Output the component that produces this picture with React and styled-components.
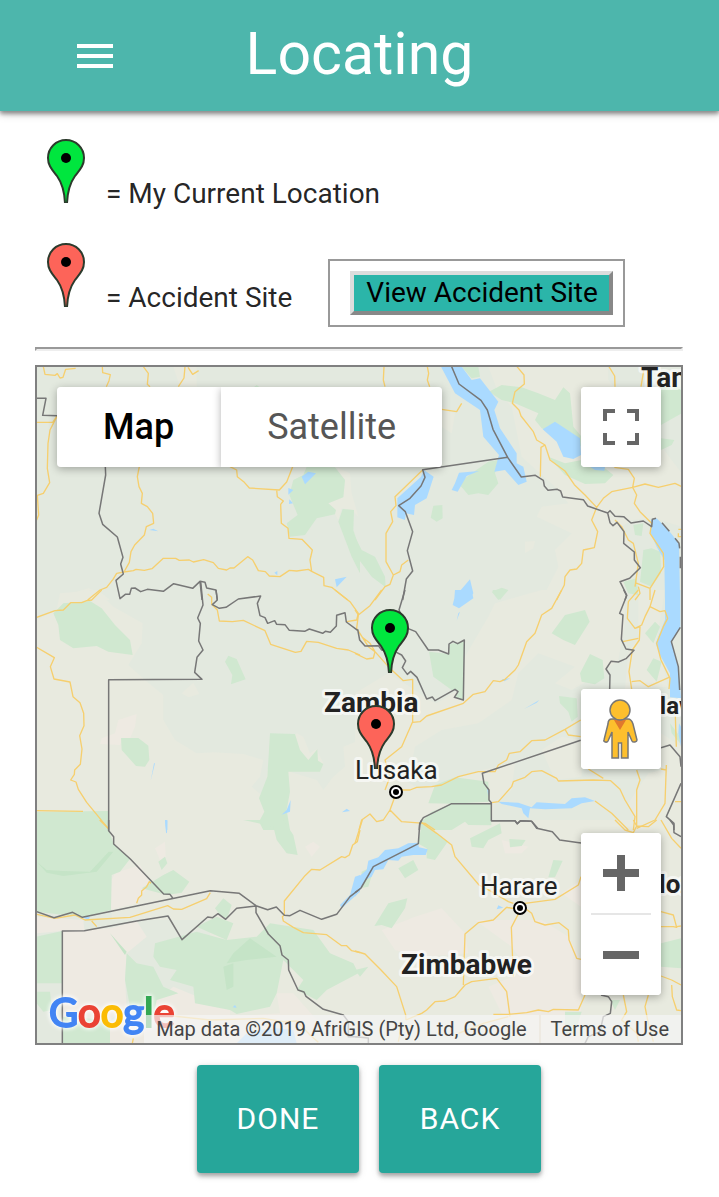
import React from 'react';
import styled, { createGlobalStyle } from 'styled-components';

const GlobalStyle = createGlobalStyle`
  *, *::before, *::after { box-sizing: border-box; }
  body {
    margin: 0;
    background: #fff;
    color: rgba(0, 0, 0, 0.87);
    font-family: Roboto, "Liberation Sans", sans-serif;
    font-size: 28px;
  }
  button { font-family: inherit; cursor: pointer; }
`;

const Header = styled.header`
  display: grid;
  grid-template-columns: 1fr auto 1fr;
  align-items: center;
  height: 111px;
  background: #4db6ac;
  color: #fff;
  box-shadow: 0 4px 4px rgba(0, 0, 0, 0.14), 0 2px 10px rgba(0, 0, 0, 0.2), 0 2px 4px rgba(0, 0, 0, 0.3);
`;

const MenuButton = styled.button`
  display: flex;
  width: 48px;
  margin-left: 71px;
  padding: 0;
  border: 0;
  background: none;
  color: inherit;
`;

const Title = styled.h1`
  margin: 0;
  padding-bottom: 4px;
  font-size: 59px;
  font-weight: 400;
  line-height: 68px;
`;

const Main = styled.main`
  padding: 28px 36px 24px 35px;
`;

const Legend = styled.div`
  display: grid;
  gap: 20px;
`;

const LegendRow = styled.div`
  display: flex;
  align-items: baseline;
  min-height: 84px;
`;

const PinImage = styled.svg`
  flex: none;
  width: 64px;
  height: 64px;
`;

const LegendText = styled.span`
  margin-left: 7px;
  line-height: 34px;
`;

const ActionFrame = styled.div`
  align-self: flex-end;
  margin-left: 36px;
  padding: 10px 10px 10px 20px;
  border: 2px solid #999;
`;

const ViewButton = styled.button`
  display: block;
  height: 44px;
  padding: 0 11px 0 12px;
  border: 4px solid;
  border-color: #ddd #888 #888 #ddd;
  background: #2bb5a9;
  color: #000;
  font-size: 28px;
  line-height: 34px;
  white-space: nowrap;
`;

const Divider = styled.hr`
  margin: 20px 0 14px;
  border: 2px solid;
  border-color: #999 #eee #eee #999;
`;

const MapFrame = styled.section`
  position: relative;
  height: 680px;
  overflow: hidden;
  border: 2px solid #808080;
  background: #e3e9df;
`;

const MapCanvas = styled.svg`
  display: block;
  width: 100%;
  height: 100%;
`;

const Logo = styled.text`
  font-family: Lato, sans-serif;
  font-size: 40px;
  stroke-width: 2px;
  filter: drop-shadow(0 0 2px #fff) drop-shadow(0 0 2px rgba(255, 255, 255, 0.6));
`;

const Card = styled.div`
  display: flex;
  flex-direction: ${(p) => (p.$column ? 'column' : 'row')};
  overflow: hidden;
  border-radius: 4px;
  background: #fff;
  box-shadow: 0 2px 8px rgba(0, 0, 0, 0.3);
`;

const TopControls = styled.div`
  position: absolute;
  inset: 20px 20px auto;
  display: flex;
  justify-content: space-between;
`;

const SideControls = styled.div`
  position: absolute;
  right: 20px;
  bottom: 48px;
  display: grid;
  gap: 64px;
`;

const TypeButton = styled.button`
  height: 80px;
  padding: ${(p) => (p.$active ? '0 47px 0 46px' : '0 46px')};
  border: 0;
  background: #fff;
  color: ${(p) => (p.$active ? '#000' : '#565656')};
  font-size: 36px;
  font-weight: ${(p) => (p.$active ? 500 : 400)};
  box-shadow: 0 2px 8px rgba(0, 0, 0, 0.3);
`;

const IconButton = styled.button`
  display: grid;
  place-items: center;
  width: 80px;
  height: 80px;
  padding: 0;
  border: 0;
  background: #fff;
  color: #666;
`;

const ZoomRule = styled.div`
  height: 2px;
  margin: 0 10px;
  background: #e6e6e6;
`;

const Attribution = styled.footer`
  position: absolute;
  right: 0;
  bottom: 0;
  display: flex;
  gap: 2px;
  color: #444;
  font-size: 20px;
  line-height: 28px;
  white-space: nowrap;
`;

const Credit = styled.span`
  padding: 0 12px;
  background: rgba(245, 245, 245, 0.7);
`;

const TermsLink = styled.a`
  padding: 0 12px 0 10px;
  background: rgba(245, 245, 245, 0.7);
  color: inherit;
  text-decoration: none;
`;

const Actions = styled.div`
  display: flex;
  justify-content: center;
  gap: 20px;
  margin-top: 20px;
  padding-left: 20px;
`;

const ActionButton = styled.button`
  width: 162px;
  height: 108px;
  padding: 0 0 2px;
  border: 0;
  border-radius: 4px;
  background: #26a69a;
  color: #fff;
  font-size: 30px;
  letter-spacing: 1px;
  box-shadow: 0 4px 4px rgba(0, 0, 0, 0.14), 0 2px 10px rgba(0, 0, 0, 0.12), 0 2px 4px rgba(0, 0, 0, 0.2);
`;

function PinShape({ color }) {
  return (
    <>
      <path
        d="M32 1C42 1 50 9 50 19C50 27 45.500 31 41 37C36 44 33.500 53 33 64H31C30.500 53 28 44 23 37C18.500 31 14 27 14 19C14 9 22 1 32 1Z"
        fill={color}
        stroke="#2c3a2c"
        strokeWidth="2"
      />
      <circle cx="32" cy="19" r="5" fill="#000" />
    </>
  );
}

const GREEN = '#00e63e';
const RED = '#fd6459';

const layers = [
  { kind: 'beige', fill: '#e8eadf' },
  { kind: 'pink', fill: '#eeeae2' },
  { kind: 'park', fill: '#d0e8d0' },
  { kind: 'parkDark', fill: '#c5e4c7' },
  { kind: 'water', fill: '#aadaff' },
  { kind: 'roads', stroke: '#f6cf6e', width: 4 },
  { kind: 'borders', stroke: '#777', width: 4.5 },
];

// The map is cut in six tiles, each drawn on a grid three times as fine as the canvas.
const tiles = [
  {
    x: -7, y: -7,
    beige: 'M430 20L500 20 500 80 450 80ZM90 710L175 685 215 700 240 720 90 720ZM890 385L925 325 960 340 965 400 985 470 965 450 935 445 925 480 895 430 940 410 945 360 920 330Z',
    park: 'M830 320L915 322 945 360 940 412 895 430 918 450 915 463 860 475 825 525 780 530 770 490 803 465 778 405 790 360 820 345ZM938 447L972 450 970 510 990 570 990 640 965 590 925 485ZM672 81L680 75 688 81Z',
    water: 'M815 350L835 335 858 340 825 373ZM775 384L790 390 775 404ZM778 418L789 430 777 432ZM915 658L950 650 920 682ZM733 638L742 633 742 646ZM358 510L370 506 385 514Z',
    roads: 'M40 20L45 43 75 46 82 41 90 54 99 52 107 28 137 25M217 20L218 38 241 44 237 62 229 80M340 20L355 40 352 73 360 80M465 20L462 54 445 80M474 22L488 43 506 32M82 167L60 210 54 250 52 325 59 368 40 400 22 406 26 465 20 480M20 187L68 187 82 167M328 320L322 350 327 380 337 400 334 430 352 440 368 460 371 490 349 500 343 525 314 555 303 575 298 607 282 636 260 640 249 658 230 682 210 690 173 720M282 636L310 632 318 628 343 631 366 626 400 595 437 595 448 601 478 600 490 606 521 599 550 608 565 625 590 630 600 624 612 624 653 590 668 600 685 632 706 635 718 648 750 650 778 631 800 633 835 628 845 634 881 652 882 677 905 682 953 720M600 320L620 330 622 350 643 367 658 384 748 390 770 366 788 320M740 390L742 410 760 423 752 433 754 490 774 505 777 535 816 538 847 570 840 600 845 634',
    borders: 'M20 115L48 115 38 166 82 167M226 320L227 345 207 460 218 493 262 531 279 592 272 612 280 642 258 661 270 716 286 703 299 703 304 685 315 684 332 695 352 688 400 694 431 671 488 685 510 664 525 667 530 684 558 690 562 720M510 664L516 720',
  },
  {
    x: 318, y: -7,
    beige: 'M400 20L760 20 760 60 860 180 980 340 980 500 900 475 830 480 800 500 850 620 800 690 720 720 560 720 610 620 600 570 650 520 545 470 560 440 640 430 600 380 500 290 470 140 430 100ZM510 545L540 543 535 565 510 580ZM260 140L300 160 290 220 260 200Z',
    park: 'M320 20L370 20 375 50 350 55ZM402 95L440 75 500 82 550 100 600 120 625 82 645 100 655 200 680 230 680 260 560 205 540 180 550 160 480 130 440 120ZM918 80L980 80 980 160 918 195ZM918 235L958 240 950 255 918 270ZM580 290L630 310 680 300 750 325 775 345 750 370 690 372 630 345ZM310 370L350 340 400 305 430 300 420 340 430 370 400 405 370 400 340 405ZM235 437L262 435 263 475 245 485 227 473ZM0 530L20 570 60 590 90 650 92 682 50 650 20 610 5 590ZM865 570L890 565 916 575 918 640 890 680 855 665 860 620ZM805 665L845 655 850 705 820 700ZM410 695L440 683 460 690 430 720ZM835 495L865 490 860 528 840 525Z',
    water: 'M258 20L320 20 350 60 375 55 430 125 418 150 435 205 485 280 485 310 505 320 515 365 490 375 450 330 418 335 432 285 385 230 375 150 300 100ZM563 208L600 185 675 235 678 285 655 297 625 290 605 245ZM705 320L750 320 748 332 720 330ZM300 370L312 338 372 333 335 348 308 395 290 390ZM207 330L236 350 215 415 180 435 177 465 153 460 150 480 127 472 127 415 198 350ZM888 480L905 475 943 514 972 550 975 720 930 720 928 600 905 560 885 515ZM300 710L345 658 355 700 340 720 300 720Z',
    roads: 'M87 20L85 60 90 80M217 20L221 40 217 60 224 80M260 148L305 155 320 130M486 20L507 45 508 72 480 95 472 130 492 150 498 168 535 215 545 240 570 255 585 300 630 333 658 374 690 405 725 442 710 480 728 515 718 563 685 570 680 610 665 627 645 630 630 650 628 675 605 720M570 255L558 262 556 350M762 20L779 48 780 80M868 20L858 80M778 322L820 328 838 355 833 382 770 395 745 415 725 442M833 382L870 372 910 382 960 370 980 380M833 382L845 405 838 430 855 455 890 490 885 520 925 580 926 620 885 685 840 668M850 680L855 700 840 720M885 685L885 720M780 480L800 500 820 540 835 550 850 610 840 680M203 330L120 410 123 437 107 455 113 485 93 520 93 605 115 645 135 635 140 615 160 600M115 645L105 673 90 680 60 720M970 508L980 508M970 520L970 530 980 530',
    borders: 'M143 720L154 657 173 633 157 572 173 515 151 455 131 437 165 415 198 378 210 352 203 329 458 292 414 208 397 150 378 121 312 72 290 20M458 292L499 351 541 346 565 361 568 378 579 391 607 388 617 393 623 411 685 419 698 438 758 459 765 452 780 469 806 470 828 489 865 483 890 500 892 478 903 475M921 488L943 514M960 535L972 550 974 565M758 459L765 488 774 497 786 487 807 515 806 550 838 576 838 600 856 623 824 655 795 665 815 705 810 720M976 590L976 625',
  },
  {
    x: -7, y: 223,
    beige: 'M20 90L80 60 90 10 200 0 250 50 338 100 335 160 295 225 345 270 400 315 400 390 435 450 500 490 550 487 640 492 700 510 690 560 665 590 700 620 720 500 800 430 820 440 840 490 860 478 880 520 870 545 780 545 860 570 880 600 790 630 780 720 20 720ZM455 310L490 278 508 312 475 322ZM910 560L945 530 940 470 990 450 990 720 780 720 790 630 880 600Z',
    pink: 'M255 430L265 390 320 372 315 410 300 445 275 450 270 465 210 462 215 445Z',
    park: 'M70 70L100 40 180 33 215 55 255 105 300 150 308 195 235 185 200 168 130 175 90 150 85 105ZM595 197L620 207 647 268 603 283 607 255 585 215ZM273 444L325 444 355 467 358 510 345 530 318 528 275 480ZM720 430L795 432 810 480 835 510 862 478 864 512 880 522 870 545 775 545 780 605 770 660 780 720 700 720 687 695 703 665 687 625 712 560ZM20 665L235 663 235 720 20 720Z',
    water: 'M372 520L375 520 362 572ZM405 690L412 692 412 720 408 720ZM782 630L780 665 755 674 770 660ZM936 667L950 656 960 663Z',
    roads: 'M20 82L75 62 100 60 122 38 155 38 170 32 185 30 215 0M20 172L73 203 61 230 72 267 120 276 129 320 150 338 161 370 162 407 149 437 156 477 151 523 134 540 133 553 122 570 138 576 145 598 170 637 235 716M20 662L159 664M533 12L545 22 545 43 562 60 568 93 607 95 640 91 705 122 722 163 796 187 813 184 830 154 865 157 920 175 955 180 990 195M915 0L960 35 985 70 980 90 950 95',
    borders: 'M512 -26L519 45 503 84 511 100 506 153 519 180 501 202 494 247 516 268 236 269 236 722M558 0L562 30 547 44 568 55 588 52 625 27 692 18 682 40 690 77 705 83 713 100 734 92 740 103 765 104 778 121 824 124 838 117 878 130 886 124 901 127 919 108 920 76 945 68 949 96 983 121',
  },
  {
    x: 318, y: 223,
    beige: 'M0 310L100 250 180 300 215 328 245 340 310 300 330 200 400 80 420 40 560 0 810 0 810 100 790 210 740 250 650 300 600 280 660 230 550 190 490 250 470 330 370 400 260 420 180 470 170 520 130 560 200 600 380 540 480 520 470 600 420 640 410 690 600 720 0 720ZM560 480L620 440 680 450 680 560 600 570ZM918 430L980 470 980 720 850 720 820 640 880 550 918 540ZM820 190L850 140 850 0 930 0 905 150 940 290 810 297Z',
    park: 'M590 130L630 75 690 60 704 95 660 165 625 150ZM222 185L282 192 284 162 328 155 326 330 298 322 310 303 290 300 235 260ZM675 250L705 192 743 210 748 265 720 283 680 275ZM612 318L665 325 668 380 650 395 640 365 615 340ZM240 585L300 562 400 575 402 635 290 641 220 640ZM290 641L409 641 409 706 340 705 330 695 290 720 200 720 194 700 230 665ZM870 130L900 95 915 110 895 160ZM875 240L895 205 920 215 905 275ZM412 0L460 0 435 30ZM945 400L975 440 975 460 950 430Z',
    water: 'M300 0L350 0 355 25 312 55 293 45 298 25ZM315 65L305 92 310 70ZM930 0L976 0 976 112 949 155 970 230 978 325 945 322 945 250 915 195 902 160 930 90ZM553 330L507 357 545 338ZM440 268L465 265 448 274ZM430 635L490 638 530 652 545 637 630 642 650 625 690 622 720 633 680 640 650 655 570 658 525 655 520 685 505 670 500 655 440 642ZM396 595L403 605 400 620ZM972 400L978 410 978 470 970 430Z',
    roads: 'M80 0L45 47 10 75 0 60M10 75L5 115 40 170 60 185 100 230 145 272 173 268 173 395 140 470 90 510 105 560 90 600M0 190L35 207 55 204 60 185M20 140L45 160 60 185M620 0L590 55 560 75 540 130 515 155 490 225 480 240 450 268 435 275 415 272 390 305 355 313 325 340 215 378 195 395 173 397M677 390L630 418 570 450 530 452 495 485 463 490 455 510 430 525 420 545 370 545 310 560 260 585 230 590 185 592 165 600 140 600M677 440L640 435 630 418M125 605L105 660 140 695 210 700 240 720M105 660L85 690 65 695 45 672 20 690 12 720M410 638L430 635 470 590 475 575 510 562 530 545 560 542 605 565 610 573 715 570 767 572 795 598 810 630 840 680 835 720M700 537L745 565M845 540L855 570 845 600 845 710M720 633L770 670 820 720M934 525L930 640 900 690 845 715M934 540L918 537M961 378L964 470M960 635L978 635M900 0L885 50 915 65 930 62 938 85 925 110 905 160 918 210 945 265 942 297M850 0L820 35 817 85 840 115 855 110 853 150 832 180 822 245 830 297M885 50L870 80 860 105 840 115M803 155L850 145M830 275L855 272 880 290 942 262',
    borders: 'M8 118L14 150 30 168 70 167 80 180 120 185 140 195 152 213 142 233 157 253 167 244 186 262 215 327 232 321 240 332 300 298 309 305 298 322 325 330 328 150 308 161 294 154 282 162 281 192 250 180 220 180 182 125 158 115 132 60 150 0M806 0L815 17 794 70 804 75 799 148 813 177 837 181 813 206 790 216 768 214 753 237 765 255 764 297M677 451L382 550 387 580 402 600 402 630 409 638 409 692 480 692 487 701 497 692 530 694 548 715M409 641L290 641 205 683 194 700 193 720M976 112L949 155 970 230 974 300M918 473L945 465 975 500 978 530M978 580L934 680 957 700 957 720',
  },
  {
    x: -7, y: 453,
    beige: 'M236 0L990 0 990 670 540 670 540 300 245 300 245 160Z',
    pink: 'M97 333L240 325 320 303 350 350 290 400 285 480 290 560 240 600 240 670 97 670ZM245 180L255 160 330 135 360 190 320 250 240 270ZM375 85L405 65 407 110 390 120ZM20 290L160 300 163 330 97 333 20 340ZM370 550L430 500 600 570 600 590 750 580 740 520 790 520 860 600 850 670 240 670 240 620ZM825 80L850 65 870 80 845 110Z',
    park: 'M20 30L236 30 251 72 300 117 270 155 245 165 243 270 160 292 20 275ZM20 350L97 333 97 490 20 490ZM20 515L60 515 66 570 40 575 20 550ZM97 590L240 600 240 670 97 670ZM385 125L405 110 412 130 395 150ZM335 205L400 165 430 150 478 185 455 218 410 225ZM640 0L760 0 790 45 803 105 770 100 740 60 730 20ZM375 370L430 355 500 335 590 360 680 350 720 310 850 330 900 400 970 430 985 460 890 510 860 540 800 510 820 480 760 420 740 520 720 560 620 582 600 570 495 550 490 500 420 480 440 450 390 440 370 410ZM290 400L320 430 370 440 400 500 445 520 380 540 370 590 300 560 285 480ZM555 265L580 235 605 255 590 300 570 285ZM500 320L560 290 610 310 590 360Z',
    parkDark: 'M20 125L50 150 100 153 180 155 236 95 250 95 200 155 100 168 50 158ZM610 400L660 355 740 410 650 420 590 430ZM240 340L290 395 285 405ZM580 440L610 430 610 500 590 510Z',
    water: 'M405 0L412 0 411 40 408 38ZM990 165L975 170 960 225 930 255 935 265 990 215ZM155 290L180 290 175 300ZM608 562L615 555 620 563ZM620 670L650 640 690 630 740 625 790 630 800 670Z',
    roads: 'M209 0L236 26M320 250L325 235 335 225 335 213 350 200 358 185 363 190M20 283L75 295 135 285 165 300 300 292 413 257 430 267 455 268 530 236 541 218M185 303L200 320M990 30L982 65 968 75 958 105 945 113 935 110 870 150 845 148 825 167 763 243 763 285 757 290 760 303 790 322 820 338 890 344 935 377 950 377 965 392 990 398M400 585L540 600 700 595 760 605 800 603 840 645 865 667M307 670L310 655',
    borders: 'M236 0L236 32 251 50 251 72 301 117 401 222 420 223 428 234M20 275L72 293 128 277 157 292 541 212 628 220 678 257 713 269 739 261 763 286 780 287 810 271 875 298 920 283 960 230 990 207M678 258L620 265 587 298 564 281 548 293 533 291 456 359 414 288 320 303 163 332 97 333 97 670M678 258L678 278 715 342 750 377 756 405 775 420 776 450 804 510 822 516 828 529 880 568 940 585 955 605 955 650 990 650',
  },
  {
    x: 318, y: 453,
    beige: 'M0 0L978 0 978 670 0 670Z',
    pink: 'M80 330L180 290 260 265 330 340 340 400 200 410 120 390ZM360 300L560 300 640 350 678 420 678 670 540 670 440 580 400 500 520 450 470 380ZM440 60L520 80 500 100 450 100ZM620 220L678 180 678 260Z',
    park: 'M200 10L260 50 278 65 240 120 215 115 215 85 190 71ZM345 55L435 10 440 40 400 60 385 85 350 80ZM463 57L512 60 500 78 465 82ZM595 120L623 122 600 172 580 172ZM58 318L100 250 157 235 150 265 110 325 80 315ZM20 155L60 135 40 200 18 204ZM130 145L175 120 190 150 150 175ZM0 450L40 440 15 470ZM918 370L978 355 978 445 918 440ZM765 540L795 540 780 570ZM630 575L680 575 660 640 630 640Z',
    water: 'M0 180L35 150 40 122 70 112 90 90 130 85 160 70 188 68 192 82 218 88 212 105 175 105 140 110 130 122 100 120 85 148 60 150 50 170 30 180 20 204 0 230ZM425 268L430 256 445 263Z',
    roads: 'M0 70L22 0M200 8L245 40 290 75 300 110 372 195 410 215 460 245 475 250M475 265L455 262 415 300 370 308 330 342 325 495M490 282L469 322 475 470M510 250L600 238 670 195 678 170M510 265L530 280 540 305 570 315 612 308 640 330 642 360 665 415 678 418M0 393L30 402 78 450 125 500 152 585 153 600M200 580L215 570 240 545 270 543 300 530 330 495 350 485 425 475 455 515 465 590M415 583L460 583 515 578 550 570 580 575 595 568 670 570 690 525M153 600L200 580M918 320L955 320 965 322 955 285 918 275M965 320L978 318M918 468L950 480 978 495M950 495L952 530 965 570 978 572M880 525L870 560 880 610 895 665M805 525L815 575 800 600 845 640 850 665M780 0L810 30 835 38 845 18 835 0M845 18L880 20 905 0M918 0L950 55 978 85M455 262L470 265M310 640L385 610 460 590M140 620L130 665',
    borders: 'M530 4L545 25 592 35 614 60 678 69M200 0L194 15 190 71 55 140 18 204 0 218M409 2L480 2 487 11 497 2 530 4M945 0L956 15 957 38 978 50M738 525L760 530 770 545 766 580 745 590 735 635 700 650 690 670M0 650L40 654 40 670',
  },
];

const labels = [
  { text: 'Tanzania', x: 604, y: 20, size: 28, bold: true },
  { text: 'Zambia', x: 287, y: 345, size: 28, bold: true },
  { text: 'Lusaka', x: 318, y: 412, size: 26 },
  { text: 'Harare', x: 443, y: 528, size: 26 },
  { text: 'Zimbabwe', x: 364, y: 607, size: 28, bold: true },
  { text: 'Malawi', x: 589, y: 347, size: 24, bold: true },
  { text: 'Mozambique', x: 606, y: 526, size: 26, bold: true },
];

const capitals = [[359, 425], [483, 541]];

const logoLetters = [
  ['G', '#4285f4'], ['o', '#ea4335'], ['o', '#fbbc05'],
  ['g', '#4285f4'], ['l', '#34a853'], ['e', '#ea4335'],
];

function MapDrawing() {
  return (
    <MapCanvas viewBox="0 0 644 676" preserveAspectRatio="xMidYMid slice" role="img" aria-label="Map of Zambia">
      {layers.map((layer) =>
        tiles.map((tile, i) =>
          tile[layer.kind] ? (
            <path
              key={layer.kind + i}
              transform={`translate(${tile.x} ${tile.y}) scale(${1 / 3})`}
              d={tile[layer.kind]}
              fill={layer.fill || 'none'}
              stroke={layer.stroke}
              strokeWidth={layer.width}
              strokeLinejoin="round"
            />
          ) : null
        )
      )}
      {capitals.map(([x, y]) => (
        <g key={x}>
          <circle cx={x} cy={y} r="6" fill="#fff" stroke="#000" strokeWidth="2" />
          <circle cx={x} cy={y} r="3" />
        </g>
      ))}
      {labels.map((l) => (
        <text
          key={l.text}
          x={l.x}
          y={l.y}
          fontSize={l.size}
          fontWeight={l.bold ? 700 : 400}
          fill="#222"
          stroke="rgba(255,255,255,0.6)"
          strokeWidth="6"
          strokeLinejoin="round"
          paintOrder="stroke"
        >
          {l.text}
        </text>
      ))}
      <svg x="321" y="242" width="64" height="64"><PinShape color={GREEN} /></svg>
      <svg x="307" y="338" width="64" height="64"><PinShape color={RED} /></svg>
      <Logo x="12" y="660">
        {logoLetters.map(([letter, color], i) => (
          <tspan key={i} fill={color} stroke={color}>{letter}</tspan>
        ))}
      </Logo>
    </MapCanvas>
  );
}

function Pegman() {
  return (
    <svg width="36" height="62" viewBox="0 0 36 62" aria-hidden="true">
      <path
        d="M9 21H25C28 21 29 23 30 26L34 42C34 44 30 45 29 43L25 34V60H18.500V45H15.500V60H9V34L5 43C4 45 0 44 1 42L5 26C5 23 6 21 9 21Z"
        fill="#fdbf2d"
        stroke="#777"
        strokeWidth="1.500"
      />
      <path d="M11 22H23L17 32Z" fill="#e0792d" />
      <circle cx="17" cy="12" r="10" fill="#fdbf2d" stroke="#777" strokeWidth="1.500" />
    </svg>
  );
}

export default function App() {
  return (
    <>
      <GlobalStyle />
      <Header>
        <MenuButton aria-label="Menu">
          <svg width="48" height="48" viewBox="0 0 24 24" fill="currentColor" aria-hidden="true">
            <path d="M3 18h18v-2H3v2zm0-5h18v-2H3v2zm0-7v2h18V6H3z" />
          </svg>
        </MenuButton>
        <Title>Locating</Title>
      </Header>
      <Main>
        <Legend>
          <LegendRow>
            <PinImage viewBox="1 0 64 64" aria-hidden="true"><PinShape color={GREEN} /></PinImage>
            <LegendText>= My Current Location</LegendText>
          </LegendRow>
          <LegendRow>
            <PinImage viewBox="1 0 64 64" aria-hidden="true"><PinShape color={RED} /></PinImage>
            <LegendText>= Accident Site</LegendText>
            <ActionFrame>
              <ViewButton>View Accident Site</ViewButton>
            </ActionFrame>
          </LegendRow>
        </Legend>
        <Divider />
        <MapFrame>
          <MapDrawing />
          <Attribution>
            <Credit>Map data ©2019 AfriGIS (Pty) Ltd, Google</Credit>
            <TermsLink href="#terms">Terms of Use</TermsLink>
          </Attribution>
          <TopControls>
            <Card>
              <TypeButton $active>Map</TypeButton>
              <TypeButton>Satellite</TypeButton>
            </Card>
            <Card>
              <IconButton aria-label="Toggle fullscreen view">
                <svg width="36" height="36" viewBox="0 0 36 36" fill="none" stroke="currentColor" strokeWidth="4" aria-hidden="true">
                  <path d="M2 12V2H12M24 2H34V12M34 24V34H24M12 34H2V24" />
                </svg>
              </IconButton>
            </Card>
          </TopControls>
          <SideControls>
            <Card>
              <IconButton aria-label="Street View"><Pegman /></IconButton>
            </Card>
            <Card $column>
              <IconButton aria-label="Zoom in">
                <svg width="36" height="36" viewBox="0 0 36 36" fill="currentColor" aria-hidden="true">
                  <path d="M14 0H22V14H36V22H22V36H14V22H0V14H14Z" />
                </svg>
              </IconButton>
              <ZoomRule />
              <IconButton aria-label="Zoom out">
                <svg width="36" height="36" viewBox="0 0 36 36" fill="currentColor" aria-hidden="true">
                  <path d="M0 14H36V22H0Z" />
                </svg>
              </IconButton>
            </Card>
          </SideControls>
        </MapFrame>
        <Actions>
          <ActionButton>DONE</ActionButton>
          <ActionButton>BACK</ActionButton>
        </Actions>
      </Main>
    </>
  );
}
